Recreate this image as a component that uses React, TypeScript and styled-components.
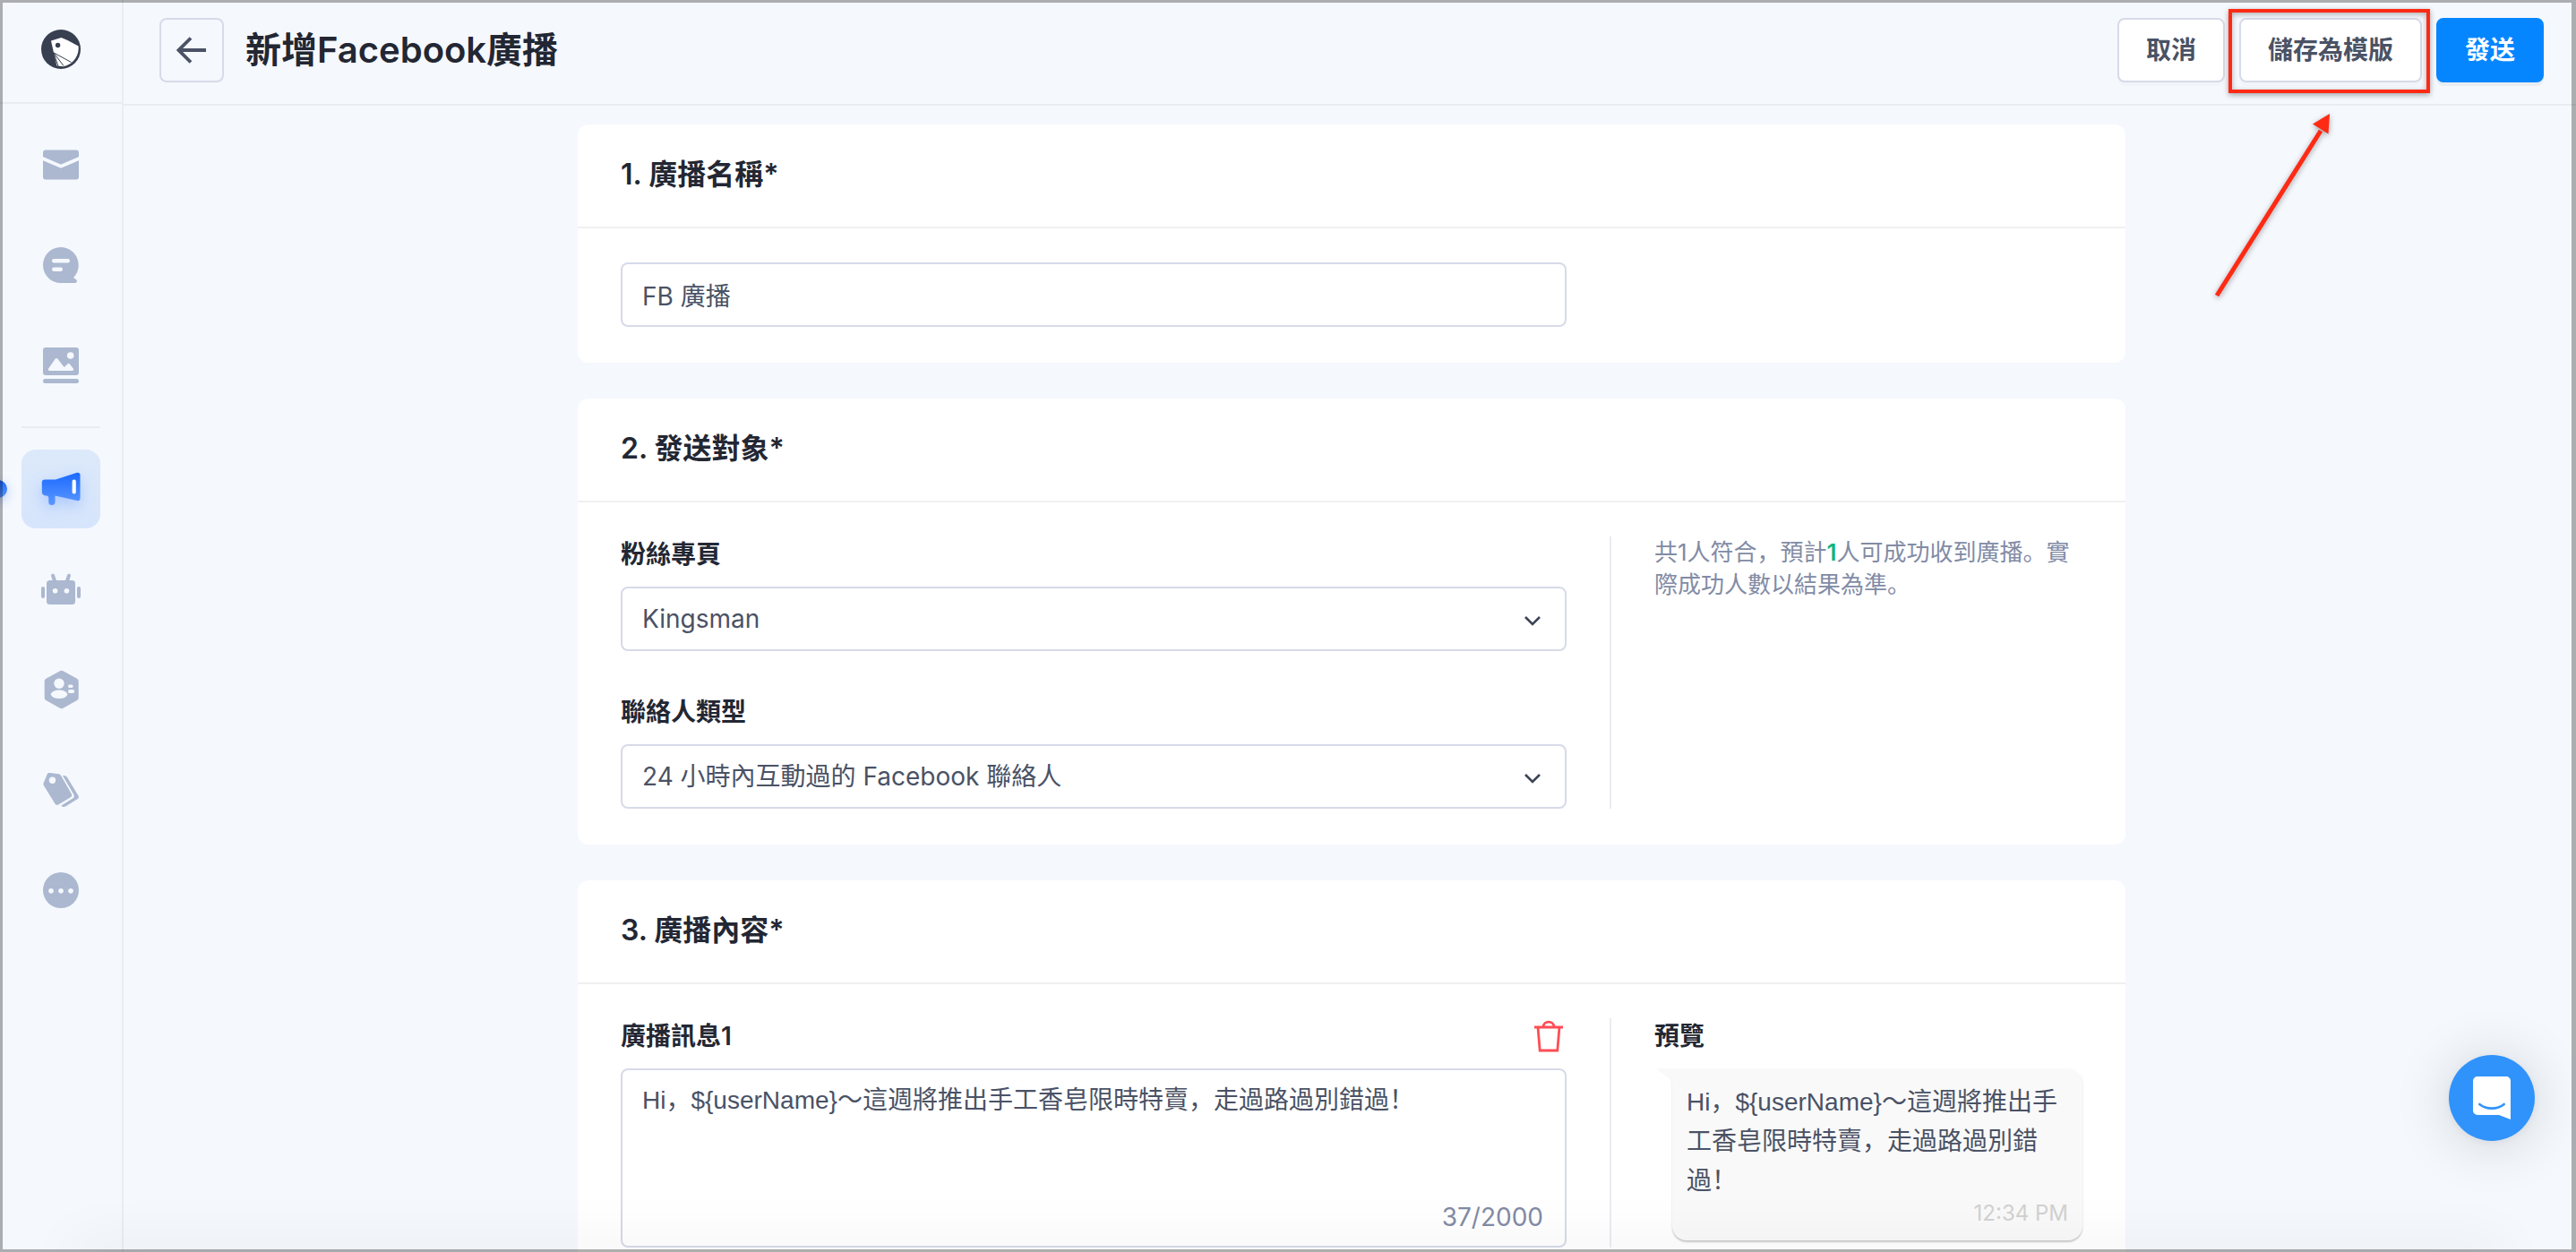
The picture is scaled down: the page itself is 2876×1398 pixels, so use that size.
import React from "react";
import styled, { createGlobalStyle, css } from "styled-components";

const color = {
  page: "#f5f8fd",
  line: "#e9ecf1",
  cardLine: "#f0f0f1",
  border: "#d7dae8",
  ink: "#232733",
  text: "#4a5265",
  muted: "#828ba5",
  icon: "#abb8d0",
  blue: "#0586ff",
  green: "#0fb57e",
  danger: "#ff4d54",
  mark: "#ff2a14",
};

const messageFont = `"Liberation Sans", "Noto Sans CJK SC", "Noto Sans CJK TC", sans-serif`;

const GlobalStyle = createGlobalStyle`
  *, *::before, *::after { box-sizing: border-box; }
  body {
    margin: 0;
    background: ${color.page};
    color: ${color.text};
    font-family: Inter, "Noto Sans CJK SC", "Noto Sans CJK TC", sans-serif;
    font-size: 28px;
  }
  button, input, select, textarea { font: inherit; color: inherit; }
`;

const Shell = styled.div`
  display: flex;
  height: 100vh;
  overflow: hidden;
`;

const Sidebar = styled.nav`
  flex: none;
  width: 138px;
  border-right: 2px solid ${color.line};
  display: flex;
  flex-direction: column;
  align-items: center;
`;

const LogoLink = styled.a`
  width: 100%;
  height: 116px;
  padding-bottom: 4px;
  border-bottom: 2px solid ${color.line};
  display: flex;
  align-items: center;
  justify-content: center;
`;

const NavList = styled.ul`
  list-style: none;
  margin: 0;
  padding: 24px 0;
  display: flex;
  flex-direction: column;
  gap: 24px;
`;

const NavRule = styled.li`
  height: 2px;
  background: ${color.line};
`;

const NavItem = styled.li`
  position: relative;
`;

const NavLink = styled.a<{ $active?: boolean }>`
  width: 88px;
  height: 88px;
  border-radius: 16px;
  display: flex;
  align-items: center;
  justify-content: center;
  color: ${color.icon};
  ${(p) =>
    p.$active &&
    css`
      background: linear-gradient(#dce9fa, #d6e5fc);
    `}
`;

const ActiveDot = styled.span`
  position: absolute;
  left: -36px;
  top: 34px;
  width: 20px;
  height: 20px;
  border-radius: 50%;
  background: linear-gradient(#1c6cff, #5794ff);
  box-shadow: 0 4px 12px rgba(28, 108, 255, 0.3);
`;

const Content = styled.div`
  flex: 1;
  min-width: 0;
  display: flex;
  flex-direction: column;
`;

const Header = styled.header`
  flex: none;
  height: 118px;
  padding: 20px 36px 0 40px;
  border-bottom: 2px solid ${color.line};
  display: flex;
  align-items: flex-start;
  gap: 24px;
`;

const BackButton = styled.button`
  width: 72px;
  height: 72px;
  padding: 0;
  border: 2px solid ${color.border};
  border-radius: 8px;
  background: transparent;
  display: flex;
  align-items: center;
  justify-content: center;
`;

const Title = styled.h1`
  flex: 1;
  margin: 0;
  font-size: 40px;
  line-height: 72px;
  font-weight: 600;
  color: ${color.ink};
`;

const Actions = styled.div`
  display: flex;
  gap: 16px;
`;

const ActionButton = styled.button<{ $primary?: boolean }>`
  height: 72px;
  padding: 0 30px;
  border: 2px solid ${(p) => (p.$primary ? color.blue : color.border)};
  border-radius: 8px;
  background: ${(p) => (p.$primary ? color.blue : "#fff")};
  color: ${(p) => (p.$primary ? "#fff" : color.text)};
  box-shadow: 0 4px 0 rgba(0, 0, 0, ${(p) => (p.$primary ? 0.045 : 0.016)});
  font-weight: 600;
  line-height: 40px;
`;

const Marked = styled.div`
  position: relative;
  display: flex;
`;

const MarkBox = styled.span`
  position: absolute;
  inset: -10px -9px -12px -12px;
  border: 4px solid ${color.mark};
  box-shadow: 0 2px 6px rgba(0, 0, 0, 0.35), inset 0 2px 6px rgba(0, 0, 0, 0.3);
  pointer-events: none;
`;

const MarkArrow = styled.svg`
  position: absolute;
  left: -32px;
  top: 100px;
  filter: drop-shadow(0 2px 3px rgba(0, 0, 0, 0.35));
  pointer-events: none;
`;

const Main = styled.main`
  flex: 1;
  min-height: 0;
  overflow-y: auto;
  scrollbar-width: none;
  padding: 21px 0 40px 4px;
`;

const Form = styled.form`
  width: 100%;
  max-width: 1728px;
  margin: 0 auto;
  display: flex;
  flex-direction: column;
  gap: 40px;
`;

const Card = styled.section`
  background: #fff;
  border-radius: 12px;
`;

const CardTitle = styled.h2`
  margin: 0;
  padding: 32px 48px 34px;
  border-bottom: 2px solid ${color.cardLine};
  font-size: 32px;
  line-height: 48px;
  font-weight: 600;
  color: ${color.ink};
`;

const CardBody = styled.div`
  padding: 38px 48px 40px;
  display: grid;
  grid-template-columns: 2fr 1fr;
  gap: 48px;
`;

const Fields = styled.div`
  display: flex;
  flex-direction: column;
  gap: 48px;
`;

const Aside = styled.aside`
  border-left: 2px solid ${color.line};
  padding-left: 48px;
`;

const Field = styled.div`
  display: flex;
  flex-direction: column;
  gap: 16px;
`;

const FieldHead = styled.div`
  display: flex;
  align-items: center;
  justify-content: space-between;
  height: 40px;
`;

const labelText = css`
  font-size: 28px;
  line-height: 40px;
  font-weight: 600;
  color: ${color.ink};
`;

const Label = styled.label`
  ${labelText}
`;

const PreviewTitle = styled.h3`
  ${labelText}
  margin: 0 0 16px;
`;

const control = css`
  width: 100%;
  border: 2px solid ${color.border};
  border-radius: 8px;
  background: #fff;
  color: ${color.text};
  outline: none;
`;

const TextInput = styled.input`
  ${control}
  height: 72px;
  padding: 0 22px;
`;

const SelectWrap = styled.div`
  position: relative;
`;

const Select = styled.select`
  ${control}
  display: block;
  height: 72px;
  padding: 0 72px 0 22px;
  appearance: none;
`;

const Chevron = styled.svg`
  position: absolute;
  right: 26px;
  top: 26px;
  pointer-events: none;
`;

const TextArea = styled.textarea`
  ${control}
  display: block;
  height: 200px;
  padding: 12px 22px;
  font-family: ${messageFont};
  line-height: 44px;
  resize: none;
`;

const AreaWrap = styled.div`
  position: relative;
`;

const Counter = styled.span`
  position: absolute;
  right: 26px;
  bottom: 14px;
  line-height: 40px;
  color: ${color.muted};
`;

const IconButton = styled.button`
  width: 40px;
  height: 40px;
  padding: 0;
  border: 0;
  background: none;
  display: flex;
  align-items: center;
  justify-content: center;
`;

const Estimate = styled.p`
  margin: 0;
  font-size: 26px;
  line-height: 36px;
  color: ${color.muted};

  strong {
    font-weight: 600;
    color: ${color.green};
  }
`;

const Bubble = styled.div`
  position: relative;
  margin-left: 20px;
  padding: 16px;
  border-radius: 0 16px 16px 16px;
  background: #f9f9f9;
  box-shadow: 0 2px 2px rgba(0, 0, 0, 0.2);
`;

const BubbleTail = styled.svg`
  position: absolute;
  left: -18px;
  top: 0;
`;

const BubbleText = styled.p`
  margin: 0;
  font-family: ${messageFont};
  line-height: 44px;
`;

const BubbleTime = styled.time`
  display: block;
  text-align: right;
  font-size: 24px;
  line-height: 28px;
  color: #d1d1d1;
`;

const Launcher = styled.button`
  position: fixed;
  right: 46px;
  bottom: 124px;
  width: 96px;
  height: 96px;
  padding: 0;
  border: 0;
  border-radius: 50%;
  background: #3093fb;
  box-shadow: 0 2px 12px rgba(0, 0, 0, 0.06), 0 4px 64px rgba(0, 0, 0, 0.16);
  display: flex;
  align-items: center;
  justify-content: center;
`;

const BottomShade = styled.div`
  position: fixed;
  left: 80px;
  right: 80px;
  bottom: -12px;
  height: 12px;
  box-shadow: 0 0 64px rgba(0, 0, 0, 0.16);
  pointer-events: none;
`;

const WindowEdge = styled.div`
  position: fixed;
  inset: 0;
  border: 3px solid rgba(0, 0, 0, 0.3);
  border-right-width: 5px;
  pointer-events: none;
`;

const LogoIcon = () => (
  <svg width="44" height="44" viewBox="46 33 44 44" aria-hidden="true">
    <circle cx="68" cy="55" r="22" fill="#373f50" />
    <path
      d="M57 45.5L68.5 42L76 45.3L87.6 51.6C88.6 60 83.500 71.500 71 74.300L63.500 73.500L60 59Z"
      fill="#fff"
    />
    <circle cx="64.600" cy="50.500" r="2.700" fill="#373f50" />
    <path
      d="M59.800 58.800L79.500 69.500M59.800 58.800L71 73.500M59.800 58.800L65 74"
      stroke="#373f50"
      strokeWidth="1"
      fill="none"
    />
  </svg>
);

const MailIcon = () => (
  <svg width="40" height="34" viewBox="0 0 40 34" fill="currentColor" aria-hidden="true">
    <path d="M3 0.500H37a3 3 0 0 1 3 3V8L21 16.200a2.500 2.500 0 0 1-2 0L0 8V3.500a3 3 0 0 1 3-3Z" />
    <path d="M0 12.300L18.800 20.300a3 3 0 0 0 2.400 0L40 12.300V30.500a3 3 0 0 1-3 3H3a3 3 0 0 1-3-3Z" />
  </svg>
);

const ChatIcon = () => (
  <svg width="40" height="40" viewBox="0 0 40 40" aria-hidden="true">
    <path
      d="M20 0a20 20 0 1 0 0 40H36c2 0 2.500-2.500 1-3.700L34 34A20 20 0 0 0 20 0Z"
      fill="currentColor"
    />
    <rect x="10" y="13" width="20" height="4.600" rx="2.300" fill="#f5f8fd" />
    <rect x="10" y="22.400" width="12" height="4.600" rx="2.300" fill="#f5f8fd" />
  </svg>
);

const ImageIcon = () => (
  <svg width="40" height="40" viewBox="0 0 40 40" aria-hidden="true">
    <rect width="40" height="31" rx="3" fill="currentColor" />
    <rect y="35" width="40" height="5" rx="2.500" fill="currentColor" />
    <circle cx="30.700" cy="9" r="3.800" fill="#f5f8fd" />
    <path
      d="M6.200 23.500L13.600 12.800a1.700 1.700 0 0 1 2.800 0L23 21.300a1 1 0 0 0 1.600 0L27.300 18.500a1.700 1.700 0 0 1 2.600 0L33.800 23.500c1 1.500 0 2.500-1.200 2.500H7.600C6 26 5.200 25 6.200 23.500Z"
      fill="#f5f8fd"
    />
  </svg>
);

const HornSvg = styled.svg`
  overflow: visible;
  filter: drop-shadow(0 6px 8px rgba(40, 110, 255, 0.25));
`;

const MegaphoneIcon = () => (
  <HornSvg width="44" height="38" viewBox="0 0 44 38" aria-hidden="true">
    <defs>
      <linearGradient id="horn" x1="0" y1="0" x2="0" y2="1">
        <stop offset="0" stopColor="#1a6aff" />
        <stop offset="1" stopColor="#5c97ff" />
      </linearGradient>
    </defs>
    <path
      d="M4 8.500H16L40 .8c2-.5 3.500.5 3.500 2.500V29.500c0 2-1.500 3-3.500 2.500L15.500 26.500V33.500a3.600 3.600 0 0 1-7.200 0V29c0-1.500-1-2.500-2.500-2.500C2.500 26.300.8 25 .8 22.500V11.700c0-2 1.200-3.200 3.200-3.200Z"
      fill="url(#horn)"
    />
    <rect x="34.600" y="8.500" width="4.200" height="16" rx="2" fill="#fff" />
  </HornSvg>
);

const RobotIcon = () => (
  <svg width="44" height="36" viewBox="0 0 44 36" aria-hidden="true">
    <rect x="6" y="8" width="32" height="27" rx="3.500" fill="currentColor" />
    <rect x="0" y="15" width="4" height="13" rx="2" fill="currentColor" />
    <rect x="40" y="15" width="4" height="13" rx="2" fill="currentColor" />
    <path d="M13 2.700L15 8.500M31 2.700L29 8.500" stroke="currentColor" strokeWidth="4" strokeLinecap="round" />
    <circle cx="15.600" cy="19.700" r="2.800" fill="#f5f8fd" />
    <circle cx="28.400" cy="19.700" r="2.800" fill="#f5f8fd" />
  </svg>
);

const ContactsIcon = () => (
  <svg width="40" height="44" viewBox="0 0 40 44" aria-hidden="true">
    <path
      d="M19 1.200a3.400 3.400 0 0 1 3.400 0L38 9.800a3.200 3.200 0 0 1 1.700 2.800V31.200a3.200 3.200 0 0 1-1.700 2.800L22.400 42.800a3.400 3.400 0 0 1-3.400 0L3.400 34a3.200 3.200 0 0 1-1.700-2.800V12.600A3.200 3.200 0 0 1 3.400 9.800Z"
      fill="currentColor"
    />
    <circle cx="18" cy="15.300" r="5.700" fill="#f5f8fd" />
    <ellipse cx="18" cy="27.300" rx="9.200" ry="4.800" fill="#f5f8fd" />
    <rect x="28" y="16.600" width="5.600" height="3.400" rx="1.700" fill="#f5f8fd" />
    <rect x="28" y="22" width="7.200" height="4" rx="2" fill="#f5f8fd" />
  </svg>
);

const TagsIcon = () => (
  <svg width="40" height="40" viewBox="0 0 40 40" aria-hidden="true">
    <path
      d="M8 1L17.500 2.200c1.300.2 2 .9 2.600 1.900L31.700 24.300c1 1.700.6 3-.9 4L17.500 36.300c-1.700 1-3.200.6-4.200-1.100L1 15.200c-.6-1-.7-1.800-.3-3L4.800 2.300C5.400 1.100 6.500.8 8 1Z"
      fill="currentColor"
    />
    <circle cx="10.500" cy="9.300" r="3.700" fill="#f5f8fd" />
    <path
      d="M22 4C24.500 3.600 26 4.300 27.200 6.200L39.300 26.300c1 1.700.7 3-.9 4L25.500 38.300c-2 1.200-4 1-5-.8L33.200 29.500c1.700-1.100 2-2.700 1-4.500Z"
      fill="currentColor"
    />
  </svg>
);

const MoreIcon = () => (
  <svg width="40" height="40" viewBox="0 0 40 40" aria-hidden="true">
    <circle cx="20" cy="20" r="20" fill="currentColor" />
    <circle cx="9" cy="20.700" r="2.800" fill="#f5f8fd" />
    <circle cx="20" cy="20.700" r="2.800" fill="#f5f8fd" />
    <circle cx="31" cy="20.700" r="2.800" fill="#f5f8fd" />
  </svg>
);

const BackIcon = () => (
  <svg width="34" height="32" viewBox="0 0 34 32" fill="none" aria-hidden="true">
    <path d="M33 16H3M16 2.500L2.500 16L16 29.500" stroke="#4a5265" strokeWidth="3.800" />
  </svg>
);

const TrashIcon = () => (
  <svg width="32" height="36" viewBox="0 0 32 36" fill="none" stroke={color.danger} strokeWidth="2.800" aria-hidden="true">
    <path d="M0 8H32M4 8L6.200 34H25.800L28 8M10 8C10 .200 22 .200 22 8" />
  </svg>
);

const LauncherIcon = () => (
  <svg width="42" height="48" viewBox="0 0 42 48" fill="none" aria-hidden="true">
    <path d="M5 0H37a5 5 0 0 1 5 5V48L29 43H5a5 5 0 0 1-5-5V5a5 5 0 0 1 5-5Z" fill="#fff" />
    <path d="M7.300 31C15 37.200 27 37.200 34.700 31" stroke="#3093fb" strokeWidth="2.600" strokeLinecap="round" />
  </svg>
);

type NavEntry = { label: string; Icon: React.FC; active?: boolean };

const primaryNav: NavEntry[] = [
  { label: "信箱", Icon: MailIcon },
  { label: "訊息", Icon: ChatIcon },
  { label: "媒體", Icon: ImageIcon },
];

const secondaryNav: NavEntry[] = [
  { label: "廣播", Icon: MegaphoneIcon, active: true },
  { label: "機器人", Icon: RobotIcon },
  { label: "聯絡人", Icon: ContactsIcon },
  { label: "標籤", Icon: TagsIcon },
  { label: "更多", Icon: MoreIcon },
];

const NavEntryRow = ({ label, Icon, active }: NavEntry) => (
  <NavItem>
    {active && <ActiveDot />}
    <NavLink href="#" aria-label={label} aria-current={active ? "page" : undefined} $active={active}>
      <Icon />
    </NavLink>
  </NavItem>
);

const SelectField = ({ id, label, value }: { id: string; label: string; value: string }) => (
  <Field>
    <Label htmlFor={id}>{label}</Label>
    <SelectWrap>
      <Select id={id} defaultValue={value}>
        <option value={value}>{value}</option>
      </Select>
      <Chevron width="24" height="24" viewBox="0 0 24 24" fill="none" aria-hidden="true">
        <path d="M4 8L12 16L20 8" stroke="#3c4354" strokeWidth="2.600" />
      </Chevron>
    </SelectWrap>
  </Field>
);

const message = "Hi，${userName}～這週將推出手工香皂限時特賣，走過路過別錯過！";

export default function App() {
  return (
    <>
      <GlobalStyle />
      <Shell>
        <Sidebar>
          <LogoLink href="#" aria-label="首頁">
            <LogoIcon />
          </LogoLink>
          <NavList>
            {primaryNav.map((n) => (
              <NavEntryRow key={n.label} {...n} />
            ))}
            <NavRule role="separator" />
            {secondaryNav.map((n) => (
              <NavEntryRow key={n.label} {...n} />
            ))}
          </NavList>
        </Sidebar>

        <Content>
          <Header>
            <BackButton type="button" aria-label="返回">
              <BackIcon />
            </BackButton>
            <Title>新增Facebook廣播</Title>
            <Actions>
              <ActionButton type="button">取消</ActionButton>
              <Marked>
                <ActionButton type="button">儲存為模版</ActionButton>
                <MarkBox />
                <MarkArrow width="144" height="220" viewBox="0 0 144 220" aria-hidden="true">
                  <path d="M7 210L123 26" stroke={color.mark} strokeWidth="5" />
                  <path d="M133 7L114 18.500L131.500 29.500Z" fill={color.mark} />
                </MarkArrow>
              </Marked>
              <ActionButton type="submit" form="broadcast" $primary>
                發送
              </ActionButton>
            </Actions>
          </Header>

          <Main>
            <Form id="broadcast" onSubmit={(e) => e.preventDefault()}>
              <Card>
                <CardTitle id="name-title">1. 廣播名稱*</CardTitle>
                <CardBody>
                  <TextInput type="text" aria-labelledby="name-title" defaultValue="FB 廣播" />
                </CardBody>
              </Card>

              <Card>
                <CardTitle>2. 發送對象*</CardTitle>
                <CardBody>
                  <Fields>
                    <SelectField id="fan-page" label="粉絲專頁" value="Kingsman" />
                    <SelectField id="contact-type" label="聯絡人類型" value="24 小時內互動過的 Facebook 聯絡人" />
                  </Fields>
                  <Aside>
                    <Estimate>
                      共1人符合，預計<strong>1</strong>人可成功收到廣播。實際成功人數以結果為準。
                    </Estimate>
                  </Aside>
                </CardBody>
              </Card>

              <Card>
                <CardTitle>3. 廣播內容*</CardTitle>
                <CardBody>
                  <Field>
                    <FieldHead>
                      <Label htmlFor="message">廣播訊息1</Label>
                      <IconButton type="button" aria-label="刪除訊息">
                        <TrashIcon />
                      </IconButton>
                    </FieldHead>
                    <AreaWrap>
                      <TextArea id="message" defaultValue={message} />
                      <Counter>37/2000</Counter>
                    </AreaWrap>
                  </Field>
                  <Aside>
                    <PreviewTitle>預覽</PreviewTitle>
                    <Bubble>
                      <BubbleTail width="19" height="17" viewBox="0 0 19 17" aria-hidden="true">
                        <path d="M0 0H19V17H18C16 10 7 7 0 0Z" fill="#f9f9f9" />
                      </BubbleTail>
                      <BubbleText>{message}</BubbleText>
                      <BubbleTime>12:34 PM</BubbleTime>
                    </Bubble>
                  </Aside>
                </CardBody>
              </Card>
            </Form>
          </Main>
        </Content>
      </Shell>
      <Launcher type="button" aria-label="開啟客服對話">
        <LauncherIcon />
      </Launcher>
      <BottomShade />
      <WindowEdge />
    </>
  );
}
